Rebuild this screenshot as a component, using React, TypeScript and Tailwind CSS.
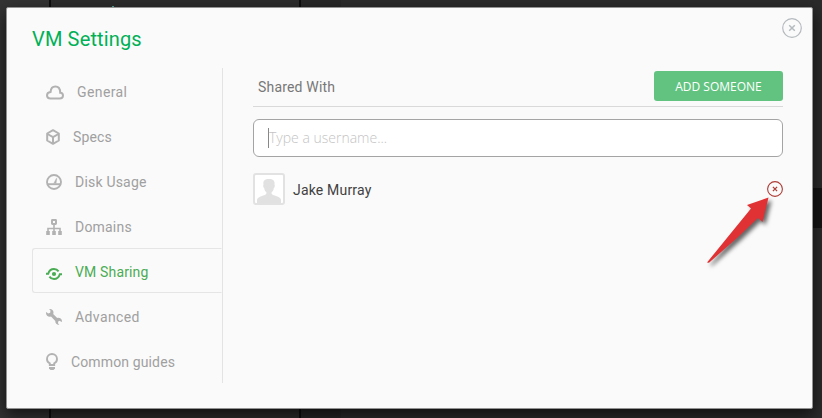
import type { ReactNode } from "react";

type Item = {
  label: string;
  icon: ReactNode;
  className: string;
};

const items: Item[] = [
  {
    label: "General",
    className: "tracking-[0.4px]",
    icon: (
      <svg width="18" height="16" viewBox="0 0 18 16" fill="none" stroke="currentColor" strokeWidth="2">
        <path d="M4.500 14.500h9.200c2 0 3.300-1.200 3.300-2.900 0-1.600-1.200-2.800-2.800-2.800C14.200 5 12.500 2.600 9.300 2.600 6.600 2.600 4.900 4.300 4.600 7.900 2.400 8.100 1 9.500 1 11.300c0 1.900 1.400 3.200 3.500 3.200Z" />
      </svg>
    ),
  },
  {
    label: "Specs",
    className: "tracking-[0.15px]",
    icon: (
      <svg width="14" height="16" viewBox="0 0 14 16" fill="none" stroke="currentColor" strokeWidth="2" strokeLinejoin="round">
        <path d="M7 1.200 1.200 4.500v7L7 14.800l5.800-3.300v-7Z" />
        <path d="M1.500 5 7 8.200 12.500 5M7 8.200v6.300" />
      </svg>
    ),
  },
  {
    label: "Disk Usage",
    className: "tracking-[0.2px]",
    icon: (
      <svg width="16" height="16" viewBox="0 0 16 16" fill="none" stroke="currentColor" strokeWidth="1.900">
        <circle cx="8" cy="8" r="7" />
        <path d="M1.200 10.200h13.600" />
        <path d="m7.600 9.500 2.800-5.300.5.200-.8 5.100" fill="currentColor" strokeWidth=".3" />
      </svg>
    ),
  },
  {
    label: "Domains",
    className: "tracking-[0.2px]",
    icon: (
      <svg width="16" height="16" viewBox="0 0 16 16" fill="none" stroke="currentColor">
        <rect x="6" y="1" width="4" height="4" rx=".4" strokeWidth="2" />
        <path d="M8 5v8M2 13V9.500h12V13" strokeWidth="1.600" />
        <path d="M.2 12h3.600v4H.2zM6.200 12h3.600v4H6.200zM12.200 12h3.600v4h-3.600z" fill="currentColor" stroke="none" />
      </svg>
    ),
  },
  {
    label: "VM Sharing",
    className: "tracking-[0.15px]",
    icon: (
      <svg width="16" height="16" viewBox="0 0 16 16" fill="none" stroke="currentColor" strokeWidth="1.900">
        <circle cx="8" cy="10" r="2.100" fill="currentColor" stroke="none" />
        <path d="M0 9.800h2.200C3.100 6.700 5.200 5 8 5c2.100 0 3.500.8 4.600 2.400M16 10.200h-2.200C12.900 13.300 10.800 15 8 15c-2.100 0-3.500-.8-4.600-2.400" />
      </svg>
    ),
  },
  {
    label: "Advanced",
    className: "tracking-[0.4px]",
    icon: (
      <svg width="16" height="16" viewBox="0 0 16 16" fill="currentColor">
        <path d="M3.200.2C5.400-.3 7.500 1.300 7.500 3.500c0 .6-.1 1-.3 1.500l4 4c2.400-.8 4.800.9 4.800 3.200l-.2.700-2.300-1.200-1.500 1.100.2 1.900 1.300.9c-2.300.5-4.400-1.200-4.200-3.700L5 7.500C2.500 8.400 0 6.500 0 3.900l.2-.8 2 1.300 2-.7.300-2.200Z" />
      </svg>
    ),
  },
  {
    label: "Common guides",
    className: "tracking-[0.13px]",
    icon: (
      <svg width="12" height="18" viewBox="0 0 12 18" fill="none" stroke="currentColor" strokeWidth="1.900">
        <path d="M3.800 12v-1.700C2 9.500 1 7.900 1 6a5 5 0 0 1 10 0c0 1.900-1 3.500-2.800 4.300V12Z" />
        <path d="M3 14h6v1.500L7.500 17h-3L3 15.500Z" fill="currentColor" stroke="none" />
      </svg>
    ),
  },
];

function Sidebar() {
  return (
    <nav className="h-[315px] w-[191px] shrink-0 border-r border-[#e3e3e3]">
      {items.map((item) => {
        const active = item.label === "VM Sharing";
        return (
          <div
            key={item.label}
            className={`flex h-[45px] items-center border pl-[13px] pt-[2px] ${
              active
                ? "rounded-l-[3px] border-[#e5e5e5] border-r-transparent text-[#4aac54]"
                : "border-transparent text-[#b2b2b2]"
            }`}
          >
            {item.icon}
            <span className={`ml-[13px] whitespace-nowrap text-[14px] leading-5 ${active ? "" : "text-[#a0a0a0]"} ${item.className}`}>
              {item.label}
            </span>
          </div>
        );
      })}
    </nav>
  );
}

function CloseIcon({ size }: { size: number }) {
  return (
    <svg width={size} height={size} viewBox="0 0 20 20" fill="none" stroke="currentColor" strokeWidth="1.200">
      <circle cx="10" cy="10" r="9.300" />
      <path d="m7.200 7.200 5.600 5.600m0-5.600-5.600 5.600" strokeWidth="1.500" />
    </svg>
  );
}

export default function App() {
  return (
    <div className="relative h-[418px] w-[822px] overflow-hidden bg-[#2b2b2b] font-['Roboto','Liberation_Sans',sans-serif]">
      <div className="flex h-full">
        <div className="w-[49px] bg-[#333333]" />
        <div className="w-[2px] bg-[#0d0d0d]" />
        <div className="w-[248px] bg-[#2c2c2c]" />
        <div className="w-[2px] bg-[#0d0d0d]" />
        <div className="w-[40px] bg-[#272727]" />
        <div className="flex flex-1 flex-col pt-[188px]">
          <div className="h-10 bg-[#151515]" />
        </div>
      </div>
      <div className="absolute left-[112px] top-[6px] h-px w-[2px] bg-[#58a99d]" />

      <main className="absolute left-[6px] top-[7px] h-[402px] w-[807px] rounded-[2px] border border-[#929292] bg-[#fafafa] shadow-[0_6px_16px_rgba(0,0,0,0.65)]">
        <header className="flex h-[60px] justify-between pl-[25px] pr-[10px]">
          <h1 className="pt-[17px] text-[20px] leading-7 tracking-[0.15px] text-[#00b056]">VM Settings</h1>
          <button aria-label="Close" className="mt-[10px] h-5 w-5 text-[#b4babd]">
            <CloseIcon size={20} />
          </button>
        </header>

        <div className="flex pl-[25px]">
          <Sidebar />
          <section className="ml-[30px] w-[530px] pt-[3px]">
            <div className="flex h-9 items-start justify-between border-b border-[#d9d9d9] pl-[5px]">
              <h2 className="pt-[6px] text-[14px] leading-5 tracking-[0.18px] text-[#777777]">Shared With</h2>
              <button className="h-[30px] w-[129px] rounded-[3px] bg-[#62c381] pt-px font-['Open_Sans',sans-serif] text-[12px] text-white">
                ADD SOMEONE
              </button>
            </div>
            <div className="mt-3 flex h-[38px] items-center rounded-[6px] border border-[#a4a4a4] bg-white pl-[14px]">
              <span className="h-5 w-px bg-[#888888]" />
              <span className="-mt-px font-['Open_Sans',sans-serif] text-[14px] font-light text-[#c4c4c4]">Type a username...</span>
            </div>
            <div className="mt-4 flex h-8 items-center">
              <svg width="32" height="32" viewBox="0 0 32 32">
                <rect x="1" y="1" width="30" height="30" rx="2" fill="#fff" stroke="#e2e2e2" strokeWidth="2" />
                <path d="M4 30v-3c0-2 2-3 5-4 3.500-1.200 4.500-1.500 4.500-3.500-1.500-1.200-2-2.500-2.300-4.500-1-.4-1.300-2.500-.7-3.500C9.800 7.500 12 6 16 6s6 1.500 5.500 5.500c.6 1 .3 3.100-.7 3.500-.3 2-.8 3.300-2.300 4.500 0 2 1 2.300 4.500 3.500 3 1 5 2 5 4v3Z" fill="#e1e1e1" />
              </svg>
              <span className="ml-2 pt-[2px] text-[14px] leading-5 tracking-[0.18px] text-[#414141]">Jake Murray</span>
              <button aria-label="Remove Jake Murray" className="ml-auto h-4 w-4 text-[#ad3b35]">
                <svg width="16" height="16" viewBox="0 0 16 16" fill="none" stroke="currentColor">
                  <circle cx="8" cy="8" r="7.400" strokeWidth="1.100" />
                  <path d="m5.900 5.900 4.200 4.200m0-4.200-4.200 4.200" strokeWidth="1.300" />
                </svg>
              </button>
            </div>
          </section>
        </div>
      </main>

      <svg className="absolute left-[700px] top-[190px] drop-shadow-[3px_3px_2px_rgba(0,0,0,0.6)]" width="80" height="80" viewBox="0 0 80 80">
        <path d="M68.500 7.500 47 15l4 3.500L31 43 7 72.500l2 .2L37 48l21-20 4.500 4Z" fill="#e03234" />
      </svg>
    </div>
  );
}
